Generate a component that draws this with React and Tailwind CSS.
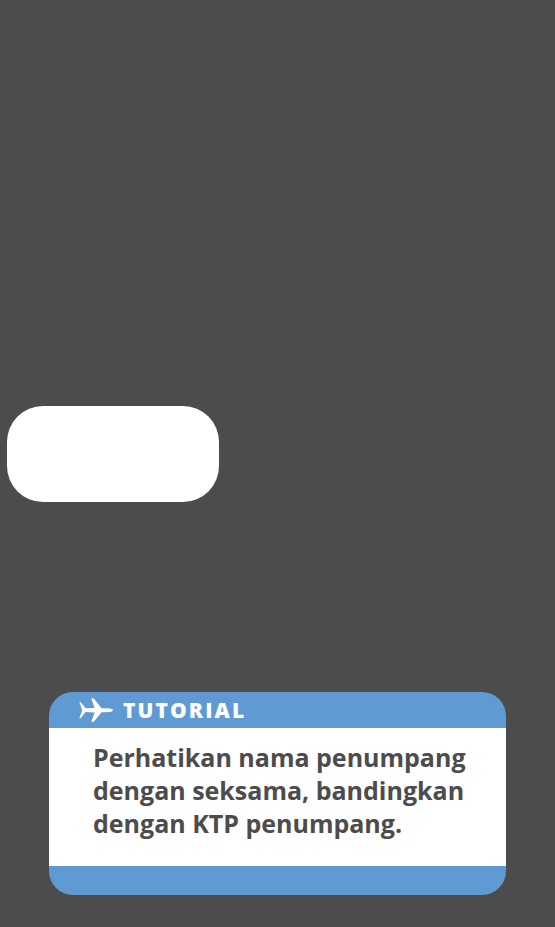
function PlaneIcon() {
  return (
    <svg viewBox="0 0 34 24" className="h-6 w-[34px] shrink-0 fill-white" aria-hidden="true">
      <path d="M0.4 4.2 L1.6 4 L6.6 10.3 L15.6 10 L12.4 0.8 Q12.8 0 14.8 0.6 L22.6 10.2 L31.2 10.5 Q34 11 34 12.2 Q34 13.4 31.2 13.9 L22.6 14.2 L14.8 23.8 Q12.8 24.2 12.4 23.6 L15.6 14.4 L6.6 14.1 L1.6 20.2 L0.4 20 L3.2 12.2 Z" />
    </svg>
  );
}

export default function App() {
  return (
    <main className="flex min-h-screen flex-col justify-between bg-[#4c4c4c] pt-[406px] pb-8 font-['Open_Sans','Noto_Sans',sans-serif]">
      <div className="ml-[7px] h-24 w-[212px] rounded-[36px] bg-white" />
      <section
        aria-labelledby="tutorial-title"
        className="mx-[49px] overflow-hidden rounded-3xl bg-[#5f9bd2] pb-[29px]"
      >
        <header className="flex h-9 items-center gap-2.5 pl-[30px]">
          <PlaneIcon />
          <h2 id="tutorial-title" className="text-[21px] leading-6 font-extrabold tracking-widest text-white">
            TUTORIAL
          </h2>
        </header>
        <p className="min-h-[138px] bg-white pt-[13px] pr-6 pb-6 pl-11 text-[25px] leading-[33px] font-bold text-[#4c4c4c]">
          Perhatikan nama penumpang dengan seksama, bandingkan dengan KTP penumpang.
        </p>
      </section>
    </main>
  );
}
